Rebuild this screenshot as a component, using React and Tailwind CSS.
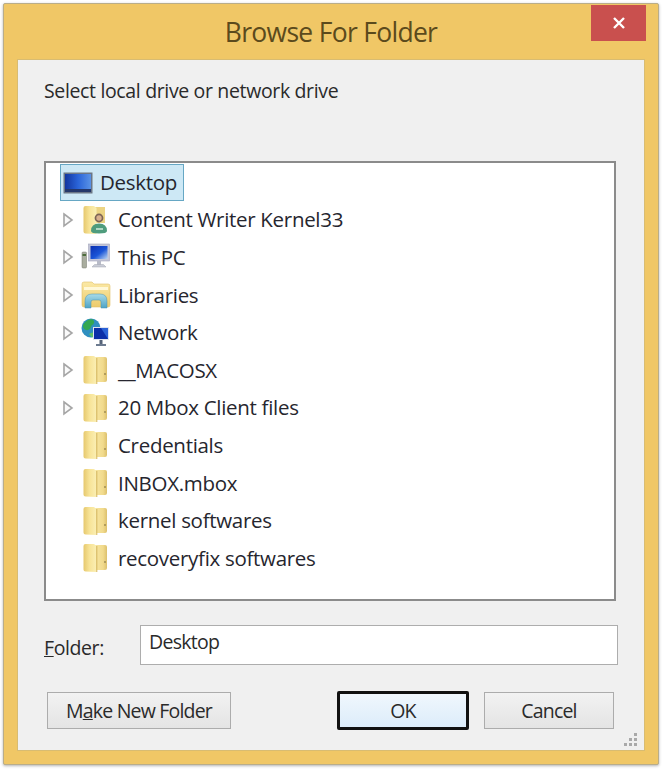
import React from 'react';

const uiFont = { fontFamily: '"Open Sans", "Noto Sans", sans-serif' };

const Arrow = () => (
  <svg width="12" height="16" viewBox="0 0 12 16" className="shrink-0">
    <path d="M2 2 L10 8 L2 14 Z" fill="#fafafa" stroke="#a6a6a6" strokeWidth="1.6" />
  </svg>
);

const FolderIcon = () => (
  <svg width="28" height="30" viewBox="0 0 28 30">
    <defs>
      <linearGradient id="folderBack" x1="0" y1="0" x2="1" y2="0">
        <stop offset="0" stopColor="#f8e8a4" />
        <stop offset="0.7" stopColor="#f1da8c" />
        <stop offset="1" stopColor="#dcc06c" />
      </linearGradient>
      <linearGradient id="folderFront" x1="0" y1="0" x2="1" y2="0">
        <stop offset="0" stopColor="#e6c86e" />
        <stop offset="0.45" stopColor="#f7e396" />
        <stop offset="1" stopColor="#fbefb4" />
      </linearGradient>
    </defs>
    <path d="M13 2 L24 2 Q26 2 26 4 L26 25 Q26 27 24 27 L13 27 Z" fill="url(#folderBack)" />
    <path d="M2.5 3 Q2.5 1 4.5 1 L13 1 L15.5 3 L15.5 29 L4.5 28.5 Q2.5 28.5 2.5 26.5 Z" fill="url(#folderFront)" />
    <path d="M15.8 3 L15.8 29" stroke="#d2b25a" strokeWidth="1" />
    <circle cx="24" cy="19" r="1" fill="#a08c50" />
  </svg>
);

const UserFolderIcon = () => (
  <svg width="28" height="30" viewBox="0 0 28 30">
    <path d="M13 2 L24 2 L24 18 L13 18 Z" fill="#ecd484" />
    <path d="M2.5 3 Q2.5 1 4.5 1 L13 1 L15.5 3 L15.5 29 L4.5 28.5 Q2.5 28.5 2.5 26.5 Z" fill="url(#folderFront)" />
    <circle cx="18" cy="13" r="4.4" fill="#7d6455" />
    <circle cx="18" cy="13" r="2.7" fill="#d8b08e" />
    <path d="M10 26 Q10 18.5 18 18.5 Q26 18.5 26 26 Q26 28.5 18 28.5 Q10 28.5 10 26 Z" fill="#4f9c7d" />
    <path d="M15 24 L22 24" stroke="#c7e6d6" strokeWidth="1.6" />
  </svg>
);

const PcIcon = () => (
  <svg width="30" height="28" viewBox="0 0 30 28">
    <defs>
      <linearGradient id="screenBlue" x1="0" y1="0" x2="1" y2="1">
        <stop offset="0" stopColor="#0b2fb0" />
        <stop offset="0.55" stopColor="#1a55d8" />
        <stop offset="1" stopColor="#bcd6f2" />
      </linearGradient>
    </defs>
    <rect x="1" y="9" width="4.5" height="16" rx="1" fill="#a9ad9f" stroke="#75796d" strokeWidth="0.5" />
    <rect x="1.5" y="11" width="3.5" height="2" fill="#4d6d3c" />
    <rect x="7.5" y="1" width="21" height="17" fill="#c3c6d8" stroke="#a3a6bb" strokeWidth="0.6" />
    <rect x="9.5" y="3" width="17" height="13" fill="url(#screenBlue)" />
    <rect x="16" y="18" width="4" height="4" fill="#b8bbc8" />
    <path d="M11 24 L25 24 L22.5 21.5 L13.5 21.5 Z" fill="#c9ccd6" stroke="#a3a6b3" strokeWidth="0.5" />
  </svg>
);

const LibraryIcon = () => (
  <svg width="30" height="28" viewBox="0 0 30 28">
    <defs>
      <linearGradient id="libFolder" x1="0" y1="0" x2="0" y2="1">
        <stop offset="0" stopColor="#fbe9a6" />
        <stop offset="1" stopColor="#eccb6c" />
      </linearGradient>
      <linearGradient id="libBlue" x1="0" y1="0" x2="0" y2="1">
        <stop offset="0" stopColor="#a8dbe8" />
        <stop offset="1" stopColor="#4fa3c4" />
      </linearGradient>
    </defs>
    <path d="M1 3 Q1 1 3 1 L11 1 L13 3 L27 3 Q29 3 29 5 L29 24 Q29 26 27 26 L3 26 Q1 26 1 24 Z" fill="url(#libFolder)" stroke="#e0c06a" strokeWidth="0.6" />
    <rect x="3" y="6" width="24" height="3" fill="#fff8d8" />
    <path d="M4 27 L4 20 Q4 13 11 13 L19 13 Q26 13 26 20 L26 27 L20 27 L20 21 Q20 19 18 19 L12 19 Q10 19 10 21 L10 27 Z" fill="url(#libBlue)" stroke="#4a93b3" strokeWidth="0.5" />
  </svg>
);

const NetworkIcon = () => (
  <svg width="30" height="30" viewBox="0 0 30 30">
    <circle cx="10" cy="10" r="9.5" fill="#2f8fc0" />
    <path d="M2 7 Q6 0.5 12 1.5 Q15 5 10.5 7.5 Q9 13 5 12 Q1.5 10.5 2 7 Z" fill="#34a852" />
    <path d="M8 16 Q12 13 15 16 L11 19.5 Z" fill="#5cc067" />
    <rect x="12" y="9" width="16" height="13" fill="#dfe3ee" />
    <rect x="13" y="10" width="14" height="11" fill="#0b2ea8" />
    <path d="M20 10 L27 10 L27 21 Z" fill="#2a62d6" />
    <rect x="18.5" y="22" width="3" height="4" fill="#566479" />
    <rect x="15" y="26" width="10" height="2" fill="#6d7b90" />
  </svg>
);

const DesktopIcon = () => (
  <svg width="30" height="22" viewBox="0 0 30 22">
    <defs>
      <linearGradient id="deskBlue" x1="0" y1="0" x2="1" y2="0">
        <stop offset="0" stopColor="#12359f" />
        <stop offset="0.5" stopColor="#2a64d8" />
        <stop offset="1" stopColor="#5a93e6" />
      </linearGradient>
    </defs>
    <rect x="0.5" y="0.5" width="29" height="21" fill="#6b7686" />
    <rect x="2" y="2" width="26" height="15" fill="url(#deskBlue)" />
    <rect x="2" y="17" width="26" height="3" fill="#25386a" />
  </svg>
);

const rows = [
  { label: 'Content Writer Kernel33', icon: <UserFolderIcon />, arrow: true },
  { label: 'This PC', icon: <PcIcon />, arrow: true },
  { label: 'Libraries', icon: <LibraryIcon />, arrow: true },
  { label: 'Network', icon: <NetworkIcon />, arrow: true },
  { label: '__MACOSX', icon: <FolderIcon />, arrow: true },
  { label: '20 Mbox Client files', icon: <FolderIcon />, arrow: true },
  { label: 'Credentials', icon: <FolderIcon /> },
  { label: 'INBOX.mbox', icon: <FolderIcon /> },
  { label: 'kernel softwares', icon: <FolderIcon /> },
  { label: 'recoveryfix softwares', icon: <FolderIcon /> },
];

const TreeRow = ({ label, icon, arrow }) => (
  <div className="flex items-center h-[37.6px] pl-[16px]">
    <div className="w-[20px] shrink-0">{arrow && <Arrow />}</div>
    <div className="w-[37px] shrink-0 flex justify-start -ml-[1px]">{icon}</div>
    <span className="text-[20.5px] tracking-[-0.3px] text-[#26262e] whitespace-nowrap">{label}</span>
  </div>
);

export default function App() {
  return (
    <div className="w-[662px] h-[770px] bg-white pt-[3px] pl-[3px]" style={uiFont}>
      <div className="w-[656px] h-[762px] bg-[#f0c766] border border-[#b9ad8a] rounded-[2px] flex flex-col px-[13px] shadow-[0_1px_3px_rgba(0,0,0,0.3)]">
        {/* Title bar */}
        <div className="relative h-[55px] shrink-0 flex items-center justify-center">
          <span className="text-[26.5px] text-[#5b4a1c] tracking-[-0.7px] mt-[3px]">Browse For Folder</span>
          <button className="absolute -right-[1px] top-[1px] w-[55px] h-[36px] bg-[#c9504e] flex items-center justify-center">
            <svg width="14" height="14" viewBox="0 0 14 14">
              <path d="M2 2 L12 12 M12 2 L2 12" stroke="#fff" strokeWidth="2.4" />
            </svg>
          </button>
        </div>

        {/* Client area */}
        <div className="relative h-[692px] bg-[#f0f0f0] border border-[#d8bc72] flex flex-col pl-[26px] pr-[26px]">
          <p className="mt-[17px] h-[28px] text-[19.5px] leading-[28px] text-[#2a2a2a] tracking-[-0.35px]">Select local drive or network drive</p>

          <div className="mt-[56px] h-[440px] w-[572px] bg-white border-2 border-[#8b8b8b] pt-[1px]">
            <div className="flex items-center h-[37px] ml-[14px] w-[124px] bg-[#cde8f5] border border-[#66a7c4] pl-[2px]">
              <DesktopIcon />
              <span className="ml-[7px] text-[20.5px] tracking-[-0.3px] text-[#26262e]">Desktop</span>
            </div>
            {rows.map((row) => (
              <TreeRow key={row.label} {...row} />
            ))}
          </div>

          <div className="flex items-center mt-[24px] h-[40px]">
            <label className="w-[96px] shrink-0 text-[19.5px] text-[#2a2a2a] mt-[5px] tracking-[-0.4px]">
              <span className="underline">F</span>older:
            </label>
            <div className="w-[478px] h-[40px] bg-white border border-[#adadad] px-[8px] text-[19.5px] leading-[32px] text-[#2a2a2a] tracking-[-0.7px]">
              Desktop
            </div>
          </div>

          <div className="flex items-center mt-[26px] ml-[3px]">
            <button className="w-[184px] h-[37px] bg-linear-to-b from-[#f2f2f2] to-[#e4e4e4] border border-[#acacac] text-[19.5px] text-[#2a2a2a] tracking-[-0.8px]">
              M<span className="underline">a</span>ke New Folder
            </button>
            <button className="ml-[106px] w-[132px] h-[39px] bg-linear-to-b from-[#f0f7fd] to-[#dcecfa] border-[3px] border-[#111111] rounded-[2px] text-[19.5px] text-[#2a2a2a] tracking-[-0.8px]">
              OK
            </button>
            <button className="ml-[15px] w-[130px] h-[37px] bg-linear-to-b from-[#f2f2f2] to-[#e4e4e4] border border-[#acacac] text-[19.5px] text-[#2a2a2a] tracking-[-0.8px]">
              Cancel
            </button>
          </div>

          {/* Resize grip */}
          <svg width="16" height="16" viewBox="0 0 16 16" className="absolute right-[5px] bottom-[2px]">
            <g fill="#a9a9a9">
              <rect x="11" y="1" width="3" height="3" />
              <rect x="6" y="6" width="3" height="3" />
              <rect x="11" y="6" width="3" height="3" />
              <rect x="1" y="11" width="3" height="3" />
              <rect x="6" y="11" width="3" height="3" />
              <rect x="11" y="11" width="3" height="3" />
            </g>
          </svg>
        </div>
      </div>
    </div>
  );
}
